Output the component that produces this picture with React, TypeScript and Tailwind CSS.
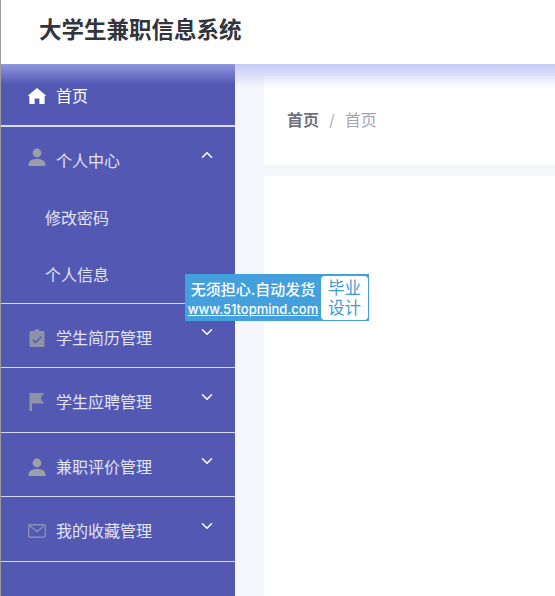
import { ChevronDown, ChevronUp } from 'lucide-react'

const cjk = 'font-["Inter","Noto_Sans_CJK_SC",sans-serif]'

function HomeIcon() {
  return (
    <svg width="18" height="16" viewBox="0 0 18 16" className="text-white">
      <path fill="currentColor" d="M9 0 18 7.6 16.6 8.6V16H11.4V10.5H6.6V16H1.4V8.6L0 7.6Z" />
    </svg>
  )
}

function ClipboardIcon() {
  return (
    <svg width="16" height="18" viewBox="0 0 16 18" className="text-[#8f93a8]">
      <path
        fill="currentColor"
        fillRule="evenodd"
        d="M2 2h3.2a3 3 0 0 1 5.6 0H14a1.5 1.5 0 0 1 1.5 1.5v13A1.5 1.5 0 0 1 14 18H2a1.5 1.5 0 0 1-1.5-1.5v-13A1.5 1.5 0 0 1 2 2Zm2.2 8.2L3.2 11.2l3.4 3.3 6.2-6.2-1-1-5.2 5.1Z"
      />
    </svg>
  )
}

function PersonIcon({ className }: { className: string }) {
  return (
    <svg width="18" height="18" viewBox="0 0 18 18" className={className}>
      <circle cx="9" cy="5" r="4.4" fill="currentColor" />
      <path fill="currentColor" d="M0.5 17c0-4 3.5-6 8.5-6s8.5 2 8.5 6v1H0.5Z" />
    </svg>
  )
}

function FlagIcon() {
  return (
    <svg width="16" height="18" viewBox="0 0 16 18" className="text-[#8f93a8]">
      <path fill="currentColor" d="M0.5 0H15L11.5 5.2 15 10.5H3V18H0.5Z" />
    </svg>
  )
}

function MailIcon() {
  return (
    <svg width="18" height="14" viewBox="0 0 18 14" fill="none" stroke="currentColor" strokeWidth="1.4" className="text-[#8a8db8]">
      <rect x="0.7" y="0.7" width="16.6" height="12.6" rx="1.2" />
      <path d="M1.5 1.5 9 7.5 16.5 1.5" />
    </svg>
  )
}

const groups = [
  { name: '学生简历管理', icon: <ClipboardIcon /> },
  { name: '学生应聘管理', icon: <FlagIcon /> },
  { name: '兼职评价管理', icon: <PersonIcon className="text-[#9ca0a8]" /> },
  { name: '我的收藏管理', icon: <MailIcon /> },
]

export default function App() {
  return (
    <div className={`relative h-[596px] w-[555px] overflow-hidden border-l border-[#9a9a9a] bg-white ${cjk}`}>
      <header className="flex h-16 items-center pb-1 pl-[38px]">
        <h1 className="text-[22.5px] font-bold text-[#33343c]">大学生兼职信息系统</h1>
      </header>

      <div className="flex h-[532px]">
        <aside className="relative w-[234px] bg-[#5359b3] text-[16px] text-[#e2e4f5]">
          <div className="absolute inset-x-0 top-0 h-5 bg-gradient-to-b from-[#9297e0] to-transparent" />

          <div className="relative flex h-[63px] items-center border-b-2 border-[#d8daf0] pl-[27px] pt-[2px] text-white">
            <HomeIcon />
            <span className="ml-[10px]">首页</span>
          </div>

          <div className="flex h-[64px] items-center pl-[27px] pt-[4px]">
            <span className="w-[18px] -translate-y-[4px]"><PersonIcon className="text-[#9a9eaa]" /></span>
            <span className="ml-[10px] flex-1">个人中心</span>
            <ChevronUp size={18} strokeWidth={2} className="mr-[19px] mb-[12px] text-white" />
          </div>
          <div className="flex h-[56px] items-center pb-[2px] pl-[44px]">修改密码</div>
          <div className="flex h-[56.5px] items-center border-b border-[#d8daf0] pl-[44px]">个人信息</div>

          {groups.map((g) => (
            <div key={g.name} className="flex h-[64.5px] items-center border-b border-[#d8daf0] pl-[27px] pt-[5px]">
              <span className="flex w-[18px] justify-center">{g.icon}</span>
              <span className="ml-[10px] flex-1">{g.name}</span>
              <ChevronDown size={18} strokeWidth={2} className="mr-[19px] mb-[11px] text-white" />
            </div>
          ))}
        </aside>

        <main className="relative flex-1 bg-[#f5f6fb] pl-[29px] pt-[12px]">
          <div className="relative flex h-[89px] items-center bg-white pb-[2px] pl-[23px] text-[16px]">
            <span className="font-bold text-[#70737f]">首页</span>
            <span className="mx-[10px] text-[#b0b2ba]">/</span>
            <span className="text-[#a3a6b0]">首页</span>
          </div>
          <div className="relative mt-[11px] h-[420px] bg-white" />
          <div className="absolute inset-x-0 top-0 h-[24px] bg-gradient-to-b from-[#c6caf6] to-transparent" />
        </main>
      </div>

      <div className="absolute left-[184px] top-[274px] flex h-[47px] w-[184px] items-center bg-[#44a0dc] pr-[1px]">
        <div className="w-[136px] text-center text-white">
          <div className="text-[15px] font-medium leading-[22px]">无须担心.自动发货</div>
          <div className="text-[13px] font-medium leading-[16px] underline">www.51topmind.com</div>
        </div>
        <div className="flex h-[44px] w-[47px] flex-col items-center justify-center rounded-sm bg-white text-[16.5px] leading-[20px] text-[#3f9ad6]">
          <span>毕业</span>
          <span>设计</span>
        </div>
      </div>
    </div>
  )
}
